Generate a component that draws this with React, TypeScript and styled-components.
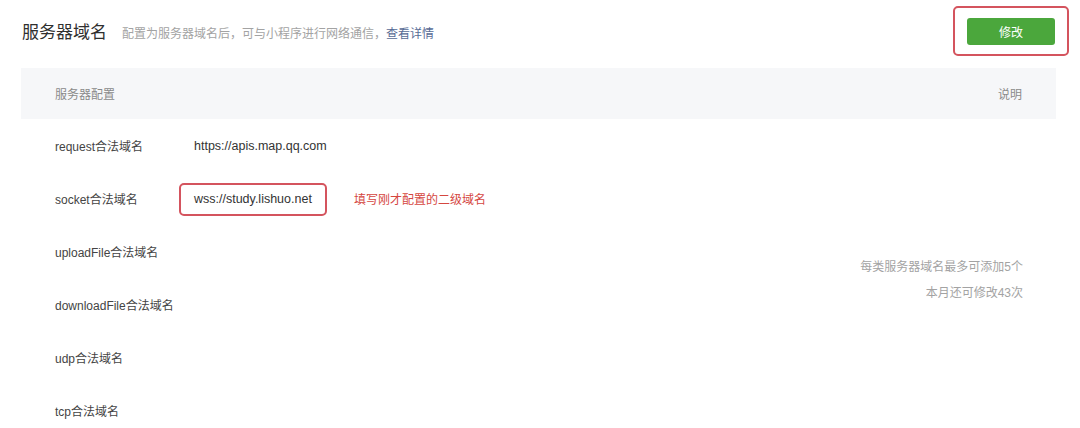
import React from "react";
import styled, { createGlobalStyle } from "styled-components";

const Global = createGlobalStyle`
  html, body { margin: 0; padding: 0; background: #fff; }
  body { font-family: "Liberation Sans", "Noto Sans CJK SC", sans-serif; color: #353535; }
`;

const Page = styled.div`
  width: 1080px;
  height: 428px;
  box-sizing: border-box;
  padding: 6px 11px 0 21px;
  overflow: hidden;
`;

const TopBar = styled.div`
  display: flex;
  align-items: center;
  justify-content: space-between;
  height: 50px;
  margin-bottom: 12px;
`;

const TitleGroup = styled.div`
  display: flex;
  align-items: baseline;
  gap: 15px;
  padding-left: 1px;
  margin-top: -2px;
`;

const Title = styled.h2`
  margin: 0;
  font-size: 17px;
  font-weight: 400;
  color: #2f2f2f;
`;

const Subtitle = styled.span`
  font-size: 12px;
  color: #a3a3a3;
`;

const Link = styled.a`
  color: #576b95;
  text-decoration: none;
`;

const Highlight = styled.div<{ $w?: number; $h?: number }>`
  box-sizing: border-box;
  display: inline-flex;
  align-items: center;
  justify-content: center;
  border: 2px solid #d4545e;
  border-radius: 5px;
  width: ${(p) => (p.$w ? `${p.$w}px` : "auto")};
  height: ${(p) => (p.$h ? `${p.$h}px` : "auto")};
`;

const Button = styled.button`
  width: 88px;
  height: 27px;
  border: none;
  border-radius: 3px;
  background: #4ba73c;
  color: #fff;
  font-family: inherit;
  font-size: 12px;
  padding: 0;
  margin-top: 1px;
`;

const Table = styled.div`
  margin-right: 13px;
`;

const HeadRow = styled.div`
  display: flex;
  align-items: center;
  justify-content: space-between;
  height: 51px;
  padding: 0 34px;
  background: #f6f7f9;
  font-size: 12px;
  color: #8a8a8a;
`;

const Body = styled.div`
  display: grid;
  grid-template-columns: 1fr auto;
  padding: 0 34px;
`;

const Rows = styled.div`
  display: flex;
  flex-direction: column;
`;

const Row = styled.div`
  display: flex;
  align-items: center;
  height: 53px;
  font-size: 12px;
`;

const Label = styled.div`
  width: 139px;
  color: #444;
`;

const Value = styled.div`
  color: #333;
  font-size: 12.5px;
`;

const BoxedValue = styled(Highlight)`
  margin-left: -15px;
  padding: 0 13px;
  margin-top: 1px;
  color: #333;
  font-size: 12.5px;
`;

const Note = styled.span`
  margin-left: 27px;
  color: #d5473f;
  font-size: 12px;
`;

const Tips = styled.div`
  display: flex;
  flex-direction: column;
  justify-content: center;
  align-items: flex-end;
  gap: 9px;
  font-size: 12px;
  color: #a3a3a3;
  margin-right: -1px;
`;

const rows: { label: string; value?: string; boxed?: boolean; note?: string }[] = [
  { label: "request合法域名", value: "https://apis.map.qq.com" },
  { label: "socket合法域名", value: "wss://study.lishuo.net", boxed: true, note: "填写刚才配置的二级域名" },
  { label: "uploadFile合法域名" },
  { label: "downloadFile合法域名" },
  { label: "udp合法域名" },
  { label: "tcp合法域名" },
];

export default function App() {
  return (
    <>
      <Global />
      <Page>
        <TopBar>
          <TitleGroup>
            <Title>服务器域名</Title>
            <Subtitle>
              配置为服务器域名后，可与小程序进行网络通信，<Link href="#">查看详情</Link>
            </Subtitle>
          </TitleGroup>
          <Highlight $w={116} $h={50}>
            <Button>修改</Button>
          </Highlight>
        </TopBar>
        <Table>
          <HeadRow>
            <span>服务器配置</span>
            <span>说明</span>
          </HeadRow>
          <Body>
            <Rows>
              {rows.map((r) => (
                <Row key={r.label}>
                  <Label>{r.label}</Label>
                  {r.boxed ? (
                    <BoxedValue $h={33}>{r.value}</BoxedValue>
                  ) : (
                    r.value && <Value>{r.value}</Value>
                  )}
                  {r.note && <Note>{r.note}</Note>}
                </Row>
              ))}
            </Rows>
            <Tips>
              <span>每类服务器域名最多可添加5个</span>
              <span>本月还可修改43次</span>
            </Tips>
          </Body>
        </Table>
      </Page>
    </>
  );
}
